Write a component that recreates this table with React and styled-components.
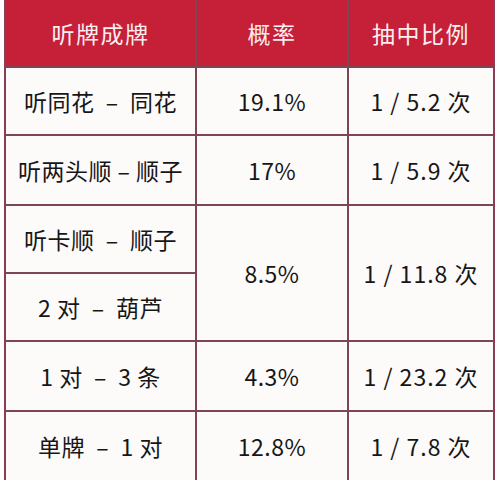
import styled, { createGlobalStyle } from "styled-components";

const Global = createGlobalStyle`
  html, body { margin: 0; padding: 0; background: #ffffff; }
  body { font-family: "Noto Sans CJK SC", "Noto Sans", sans-serif; }
`;

const rows = [
  { hand: "听同花  –  同花", rate: "19.1%", ratio: "1 / 5.2 次" },
  { hand: "听两头顺 – 顺子", rate: "17%", ratio: "1 / 5.9 次" },
  { hand: "听卡顺  –  顺子", rate: "8.5%", ratio: "1 / 11.8 次", span: 2 },
  { hand: "2 对  –  葫芦" },
  { hand: "1 对  –  3 条", rate: "4.3%", ratio: "1 / 23.2 次" },
  { hand: "单牌  –  1 对", rate: "12.8%", ratio: "1 / 7.8 次" },
];

const App = () => {
  return (
    <Page>
      <Global />
      <Table>
        <Head>听牌成牌</Head>
        <Head>概率</Head>
        <Head>抽中比例</Head>
        {rows.map((r, i) => (
          <Row key={i}>
            <Cell>{r.hand}</Cell>
            {r.rate && <Cell span={r.span}>{r.rate}</Cell>}
            {r.ratio && (
              <Cell span={r.span} wide>
                {r.ratio}
              </Cell>
            )}
          </Row>
        ))}
      </Table>
    </Page>
  );
};

const Page = styled.div`
  width: 500px;
  height: 484px;
  padding: 0 5px 4px 4px;
  box-sizing: border-box;
`;

const Table = styled.div`
  display: grid;
  grid-template-columns: 189px 150px 1fr;
  grid-template-rows: 66px 66px 68px 66px 66px 68px 68px;
  gap: 2px;
  height: 480px;
  background: #7d4556;
  border: 2px solid #8a3d57;
  border-top: none;
  box-sizing: border-box;
`;

const Head = styled.div`
  background: #c61f38;
  color: #fbeef0;
  font-size: 23px;
  display: flex;
  align-items: center;
  justify-content: center;
  letter-spacing: 1.5px;
`;

const Row = styled.div`
  display: contents;
`;

const Cell = styled.div`
  background: #fdfafa;
  color: #161616;
  font-size: 23px;
  display: flex;
  align-items: center;
  justify-content: center;
  white-space: pre;
  letter-spacing: ${(p) => (p.wide ? "1px" : "0.5px")};
  grid-row: ${(p) => (p.span ? `span ${p.span}` : "auto")};
`;

export default App;
